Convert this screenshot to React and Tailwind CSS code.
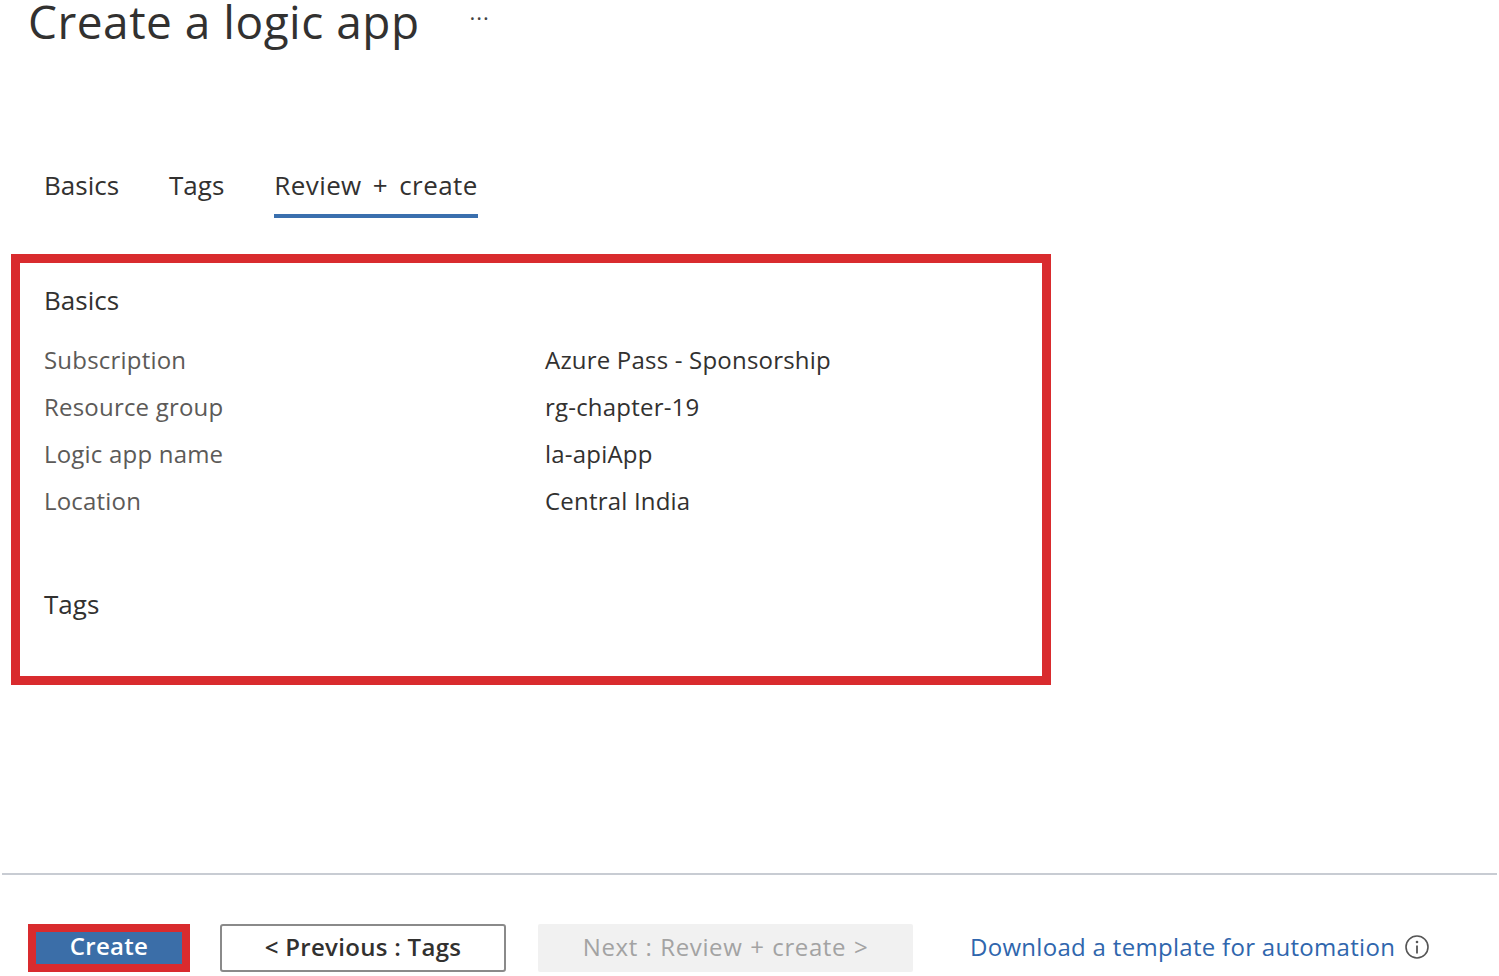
import React from 'react';

const rows = [
    ['Subscription', 'Azure Pass - Sponsorship'],
    ['Resource group', 'rg-chapter-19'],
    ['Logic app name', 'la-apiApp'],
    ['Location', 'Central India'],
];

const InfoIcon = () => (
    <svg width="26" height="26" viewBox="0 0 26 26" className="text-[#555]">
        <circle cx="13" cy="13" r="11" fill="none" stroke="currentColor" strokeWidth="1.6" />
        <circle cx="13" cy="8" r="1.3" fill="currentColor" />
        <path d="M13 11.5v8" stroke="currentColor" strokeWidth="1.8" />
    </svg>
);

const App = () => {
    return (
        <div className="min-h-[976px] w-[1499px] bg-white text-[#323130] font-['Open_Sans',sans-serif]">
            {/* header */}
            <div className="flex items-start pl-[28px] h-[42px]">
                <h1 className="text-[46px] leading-[42px] text-[#323130] tracking-[0.5px]">Create a logic app</h1>
                <span className="ml-[50px] mt-[6px] text-[22px] leading-[22px] tracking-[1px] text-[#444]">···</span>
            </div>

            {/* tabs */}
            <div className="flex gap-[50px] pl-[44px] mt-[125px] text-[26px]">
                <div className="flex flex-col">
                    <span className="leading-[36px]">Basics</span>
                </div>
                <div className="flex flex-col">
                    <span className="leading-[36px]">Tags</span>
                </div>
                <div className="flex flex-col">
                    <span className="leading-[36px] tracking-[0.4px] [word-spacing:4px]">Review + create</span>
                    <div className="mt-[11px] h-[4px] bg-[#3a6fae]"></div>
                </div>
            </div>

            {/* summary */}
            <div className="ml-[11px] mt-[36px] w-[1040px] border-[9px] border-[#d92b2e] pl-[24px] pt-[19px] pb-[54px]">
                <div className="text-[26px] leading-[36px]">Basics</div>
                <div className="mt-[18px] grid grid-cols-[501px_1fr] text-[24px] tracking-[0.2px]">
                    {rows.map(([label, value]) => (
                        <React.Fragment key={label}>
                            <div className="leading-[47px] text-[#5c5a58]">{label}</div>
                            <div className="leading-[47px] text-[#323130]">{value}</div>
                        </React.Fragment>
                    ))}
                </div>
                <div className="mt-[62px] text-[26px] leading-[36px]">Tags</div>
            </div>

            {/* footer */}
            <div className="mt-[188px] mx-[2px] h-[2px] bg-[#c8ccd3]"></div>
            <div className="flex items-center pl-[28px] mt-[49px] text-[24px] tracking-[0.3px]">
                <button className="w-[162px] h-[48px] pb-[4px] border-[8px] border-[#d92b2e] bg-[#3b6ea8] text-white font-semibold leading-none">
                    Create
                </button>
                <button className="ml-[30px] w-[286px] h-[48px] pb-[3px] border-2 border-[#8a8a8a] rounded-[3px] font-semibold text-[#323130]">
                    &lt; Previous : Tags
                </button>
                <button className="ml-[32px] w-[375px] h-[48px] pb-[3px] rounded-[2px] bg-[#f1f1f1] text-[#a3a3a3] tracking-[0.6px] [word-spacing:1px]">
                    Next : Review + create &gt;
                </button>
                <a className="ml-[57px] pb-[3px] flex items-center gap-[9px] text-[#2f66ad]">
                    Download a template for automation
                    <InfoIcon />
                </a>
            </div>
        </div>
    );
};

export default App;
